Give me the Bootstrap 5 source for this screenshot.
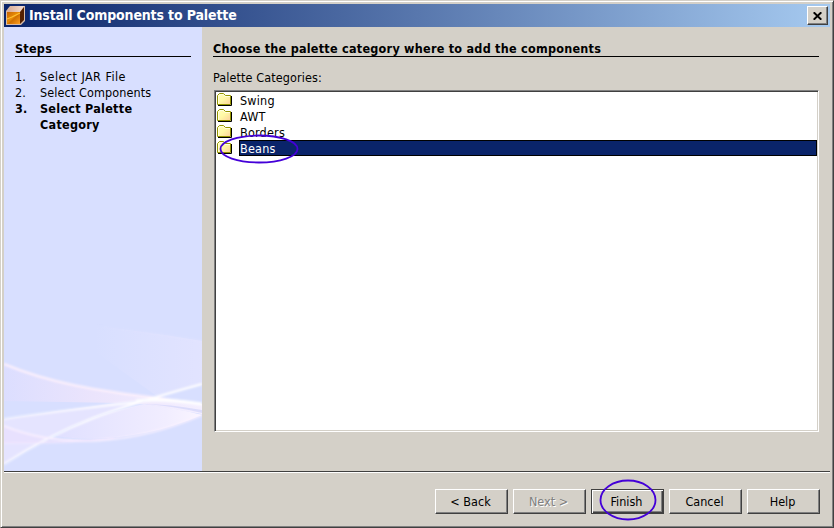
<!DOCTYPE html>
<html lang="en">
<head>
<meta charset="utf-8">
<meta name="viewport" content="width=device-width, initial-scale=1">
<title>Install Components to Palette</title>
<link href="https://cdn.jsdelivr.net/npm/bootstrap@5.3.0/dist/css/bootstrap.min.css" rel="stylesheet">
<style>
html,body{height:100%}
body{margin:0;overflow:hidden;background:#d4d0c8;color:#000;font-family:"DejaVu Sans Condensed","DejaVu Sans",sans-serif;font-stretch:condensed;font-size:12.5px;line-height:16px;letter-spacing:.1px}
.window-frame{width:834px;height:528px;padding:2px;border:1px solid #d4d0c8;border-right-color:#404040;border-bottom-color:#404040;box-shadow:inset 1px 1px #fff,inset -1px -1px #808080}
.window-body{padding:1px}
.title-strip{height:23px;background:linear-gradient(90deg,#0a246a,#a6caf0);color:#fff;padding:0 2px 0 2px}
.title-text{font-size:14px;font-weight:700;margin-left:3px;line-height:23px;letter-spacing:-.14px}
.close-btn{width:21px;height:19px}
.bevel{background:#d4d0c8;color:#000;border:1px solid;border-color:#fff #404040 #404040 #fff;box-shadow:inset -1px -1px #808080;border-radius:0;padding:0}
.content-area{height:444px}
.side{width:198px;background:#d8dfff;padding:13px 11px 0;position:relative}
.side-art{position:absolute;left:0;bottom:0}
.head-line{font-weight:700;border-bottom:1px solid #000;height:17px;line-height:18px;letter-spacing:.25px}
.step-list{margin:12px 0 0}
.step-num{width:25px;flex:none}
.step-jar{letter-spacing:.45px}
.step-current{letter-spacing:.27px}
.main-pane{padding:13px 11px 0}
.field-caption{padding:13px 0 4px}
.list-field{width:605px;height:342px;margin-left:1px;background:#fff;border:1px solid;border-color:#808080 #fff #fff #808080;box-shadow:inset 1px 1px #404040,inset -1px -1px #d4d0c8;padding:1px}
.cat-row{height:16px;padding-left:1px}
.cat-row svg{flex:none;margin-right:6px}
.cat-label{height:16px;line-height:17px;padding-left:1px;letter-spacing:.2px}
.cat-row.chosen .cat-label{background:#0a246a;color:#fff;outline:1px solid #000;outline-offset:-1px;flex:1}
.foot{border-top:1px solid #404040;box-shadow:inset 0 1px #fff;height:55px;padding:17px 10px 0;gap:5px}
.wiz-btn{width:73px;height:25px;line-height:23px;font-size:12.5px;text-align:center;letter-spacing:0;padding-right:2px}
.wiz-btn:disabled{color:#808080;text-shadow:1px 1px #fff}
.wiz-btn.main-choice{border-color:#404040;box-shadow:inset 1px 1px #fff,inset -1px -1px #404040,inset -2px -2px #808080}
.ring{position:absolute;pointer-events:none}
</style>
<script src="https://cdn.jsdelivr.net/npm/bootstrap@5.3.0/dist/js/bootstrap.bundle.min.js"></script>
</head>
<body>
<svg width="0" height="0" class="position-absolute"><defs>
<linearGradient id="fold" x2="1" y2="1"><stop stop-color="#ffffc0"/><stop offset=".5" stop-color="#fff8a4"/><stop offset="1" stop-color="#fcd09c"/></linearGradient>
<symbol id="folder" viewBox="0 0 16 16">
<path d="M1 13.500H14.500V4" fill="none" stroke="#000"/>
<path d="M.5 12.500V3.500L2.500 1.500H6.500L8.500 3.500H13.500V12.500Z" fill="url(#fold)" stroke="#949400"/>
<path d="M1.500 12V4L3 2.500H6L8 4.500H13" fill="none" stroke="#ffffe0"/>
</symbol></defs></svg>
<div class="window-frame position-relative"><div class="window-body">
<header class="title-strip d-flex align-items-center">
<svg width="20" height="21" viewBox="0 0 20 21">
<defs><linearGradient id="front" x2="1" y2="1"><stop stop-color="#c86400"/><stop offset=".45" stop-color="#e88c08"/><stop offset=".55" stop-color="#d07000"/><stop offset="1" stop-color="#ffa020"/></linearGradient><linearGradient id="topf" x2="1"><stop stop-color="#d8a890"/><stop offset="1" stop-color="#f4ded4"/></linearGradient></defs>
<path d="M0 6 4 1H19V16L15 20H0Z" fill="#d8bca8"/>
<path d="M1 7 5 1H18L14 7Z" fill="url(#topf)"/>
<path d="M1 7H14V19H1Z" fill="url(#front)"/><path d="M14 7 18 2V15L14 19Z" fill="#542000"/>
<path d="M1 14 6 12 14 8" fill="none" stroke="#ffc030" stroke-width="1.200"/></svg>
<span class="title-text">Install Components to Palette</span>
<button class="bevel close-btn ms-auto d-flex align-items-center justify-content-center" aria-label="Close"><svg width="9" height="8" viewBox="0 0 9 8" fill="none" stroke="#000" stroke-width="2"><path d="M.7.3 8.300 7.700M8.300.3.7 7.700"/></svg></button>
</header>
<main class="content-area d-flex">
<aside class="side">
<svg class="side-art" width="198" height="164" viewBox="0 0 198 164">
<defs><linearGradient id="w1" x2="1"><stop stop-color="#dcdeff"/><stop offset=".45" stop-color="#ebe4fc"/><stop offset="1" stop-color="#f4efff"/></linearGradient><linearGradient id="w2"><stop stop-color="#e0e0ff"/><stop offset=".75" stop-color="#f1edff"/><stop offset="1" stop-color="#faf5ff"/></linearGradient>
<linearGradient id="w3" gradientUnits="userSpaceOnUse" x1="90" x2="198" y1="0" y2="0"><stop stop-color="#e8e6ff" stop-opacity="0"/><stop offset="1" stop-color="#e8e6ff" stop-opacity=".6"/></linearGradient>
<linearGradient id="w4" x2="1"><stop stop-color="#fff" stop-opacity=".6"/><stop offset=".6" stop-color="#fff"/></linearGradient>
<filter id="soft" x="-10%" y="-10%" width="120%" height="120%"><feGaussianBlur stdDeviation=".8"/></filter></defs>
<path d="M50 15Q130 22 198 34V78L154 90Z" fill="url(#w3)"/>
<path d="M0 57C45 76 95 84 154 91L198 97V107L140 97 118 96 0 94Z" fill="url(#w1)"/>
<path d="M0 112C60 103 100 97 154 91 108 103 80 112 46 130L0 157Z" fill="#e5e4ff"/>
<path d="M140 97C105 105 80 112 52 129 95 136 150 129 198 108 180 103 160 100 140 97Z" fill="url(#w2)"/>
<path d="M140 97Q170 99 198 106V103Q165 97 140 97Z" fill="#dcdcfb"/>
<path d="M0 119Q30 130 60 132T120 130Q90 136 0 136Z" fill="#eadffd" opacity=".6"/>
<g fill="none" filter="url(#soft)"><path d="M0 57C45 76 95 84 154 91L198 97" stroke="#fff2fc" stroke-width="2"/><path d="M0 112C60 103 120 97 154 92" stroke="url(#w4)" stroke-width="1.800"/><path d="M0 157C60 118 110 101 198 77" stroke="url(#w4)" stroke-width="2.200"/><path d="M0 119C60 143 130 137 198 108" stroke="#fbf2ff" stroke-width="1.800"/><path d="M0 136Q65 137 110 131" stroke="#f7eaff"/><path d="M132 94Q157 91 198 97" stroke="#fff" stroke-width="3"/><path d="M50 15Q130 22 198 34" stroke="url(#w3)"/></g>
</svg>
<div class="position-relative"><div class="head-line">Steps</div>
<div class="step-list"><div class="d-flex"><span class="step-num">1.</span><span class="step-jar">Select JAR File</span></div>
<div class="d-flex"><span class="step-num">2.</span><span>Select Components</span></div>
<div class="d-flex fw-bold step-current"><span class="step-num">3.</span><span>Select Palette<br>Category</span></div></div></div>
</aside>
<section class="main-pane flex-fill">
<div class="head-line">Choose the palette category where to add the components</div>
<div class="field-caption">Palette Categories:</div>
<div class="list-field" role="listbox">
<div class="cat-row d-flex"><svg width="16" height="16"><use href="#folder"/></svg><span class="cat-label">Swing</span></div>
<div class="cat-row d-flex"><svg width="16" height="16"><use href="#folder"/></svg><span class="cat-label">AWT</span></div>
<div class="cat-row d-flex"><svg width="16" height="16"><use href="#folder"/></svg><span class="cat-label">Borders</span></div>
<div class="cat-row chosen d-flex"><svg width="16" height="16"><use href="#folder"/></svg><span class="cat-label">Beans</span></div>
</div>
</section>
</main>
<footer class="foot d-flex justify-content-end">
<button class="bevel wiz-btn">&lt; Back</button><button class="bevel wiz-btn" disabled>Next &gt;</button><button class="bevel wiz-btn main-choice">Finish</button><button class="bevel wiz-btn">Cancel</button><button class="bevel wiz-btn">Help</button>
</footer>
</div>
<svg class="ring top-0 start-0" width="832" height="526" viewBox="1 1 832 526" fill="none" stroke="#4400d8" stroke-width="1.800"><ellipse cx="259" cy="149" rx="38.500" ry="13.500"/><ellipse cx="628" cy="500" rx="27.500" ry="19.500"/></svg>
</div>
</body>
</html>
